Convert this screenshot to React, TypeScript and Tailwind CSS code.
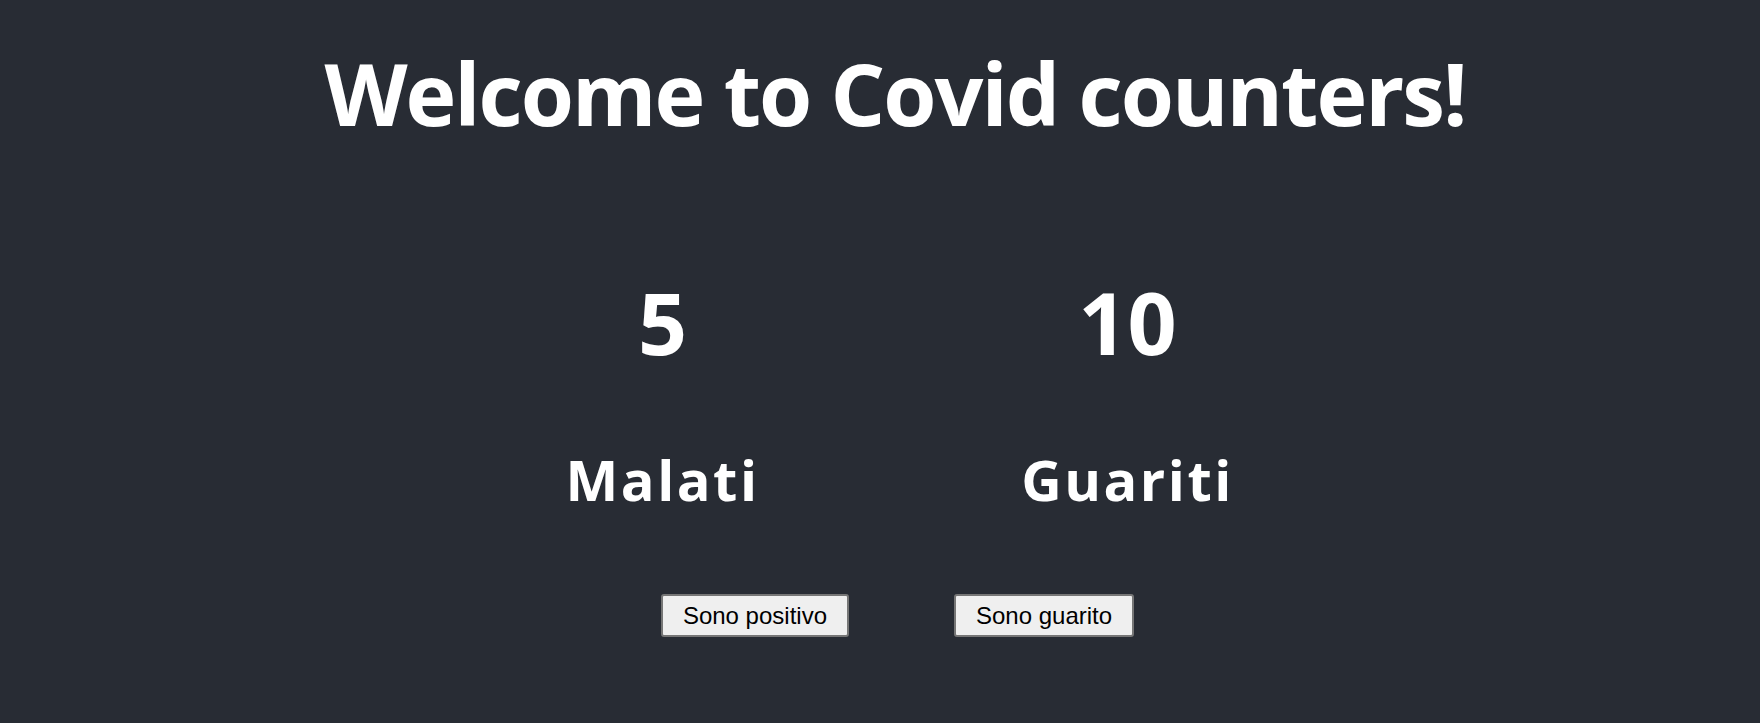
import { useState } from "react";

export default function App() {
  const [malati, setMalati] = useState(5);
  const [guariti, setGuariti] = useState(10);

  return (
    <div className="min-h-screen bg-[#282c34] pl-[30px] text-white font-['Open_Sans',sans-serif]">
      <div className="flex flex-col items-center">
        {/* Title */}
        <h1 className="mt-[50px] text-[86px] font-bold leading-[86px] tracking-[-2px] whitespace-nowrap">
          Welcome to Covid counters!
        </h1>

        {/* Counters */}
        <div className="mt-[143px] grid w-[930px] grid-cols-2">
          <div className="flex flex-col items-center">
            <span className="text-[86px] font-bold leading-[86px]">{malati}</span>
            <span className="mt-[86px] text-[56px] font-bold leading-[56px] tracking-[2.5px]">
              Malati
            </span>
          </div>
          <div className="flex flex-col items-center">
            <span className="text-[86px] font-bold leading-[86px]">{guariti}</span>
            <span className="mt-[86px] text-[56px] font-bold leading-[56px] tracking-[2.5px]">
              Guariti
            </span>
          </div>
        </div>

        {/* Buttons */}
        <div className="mt-[87px] ml-[5px] flex gap-[105px] font-['Liberation_Sans',Arial,sans-serif]">
          <button
            onClick={() => setMalati((n) => n + 1)}
            className="rounded-[3px] border-2 border-[#767676] bg-[#efefef] px-[20px] py-[6px] text-[24px] leading-[27px] text-black hover:bg-[#e5e5e5]"
          >
            Sono positivo
          </button>
          <button
            onClick={() => {
              if (malati > 0) setMalati((n) => n - 1);
              setGuariti((n) => n + 1);
            }}
            className="rounded-[3px] border-2 border-[#767676] bg-[#efefef] px-[20px] py-[6px] text-[24px] leading-[27px] text-black hover:bg-[#e5e5e5]"
          >
            Sono guarito
          </button>
        </div>
      </div>
    </div>
  );
}
